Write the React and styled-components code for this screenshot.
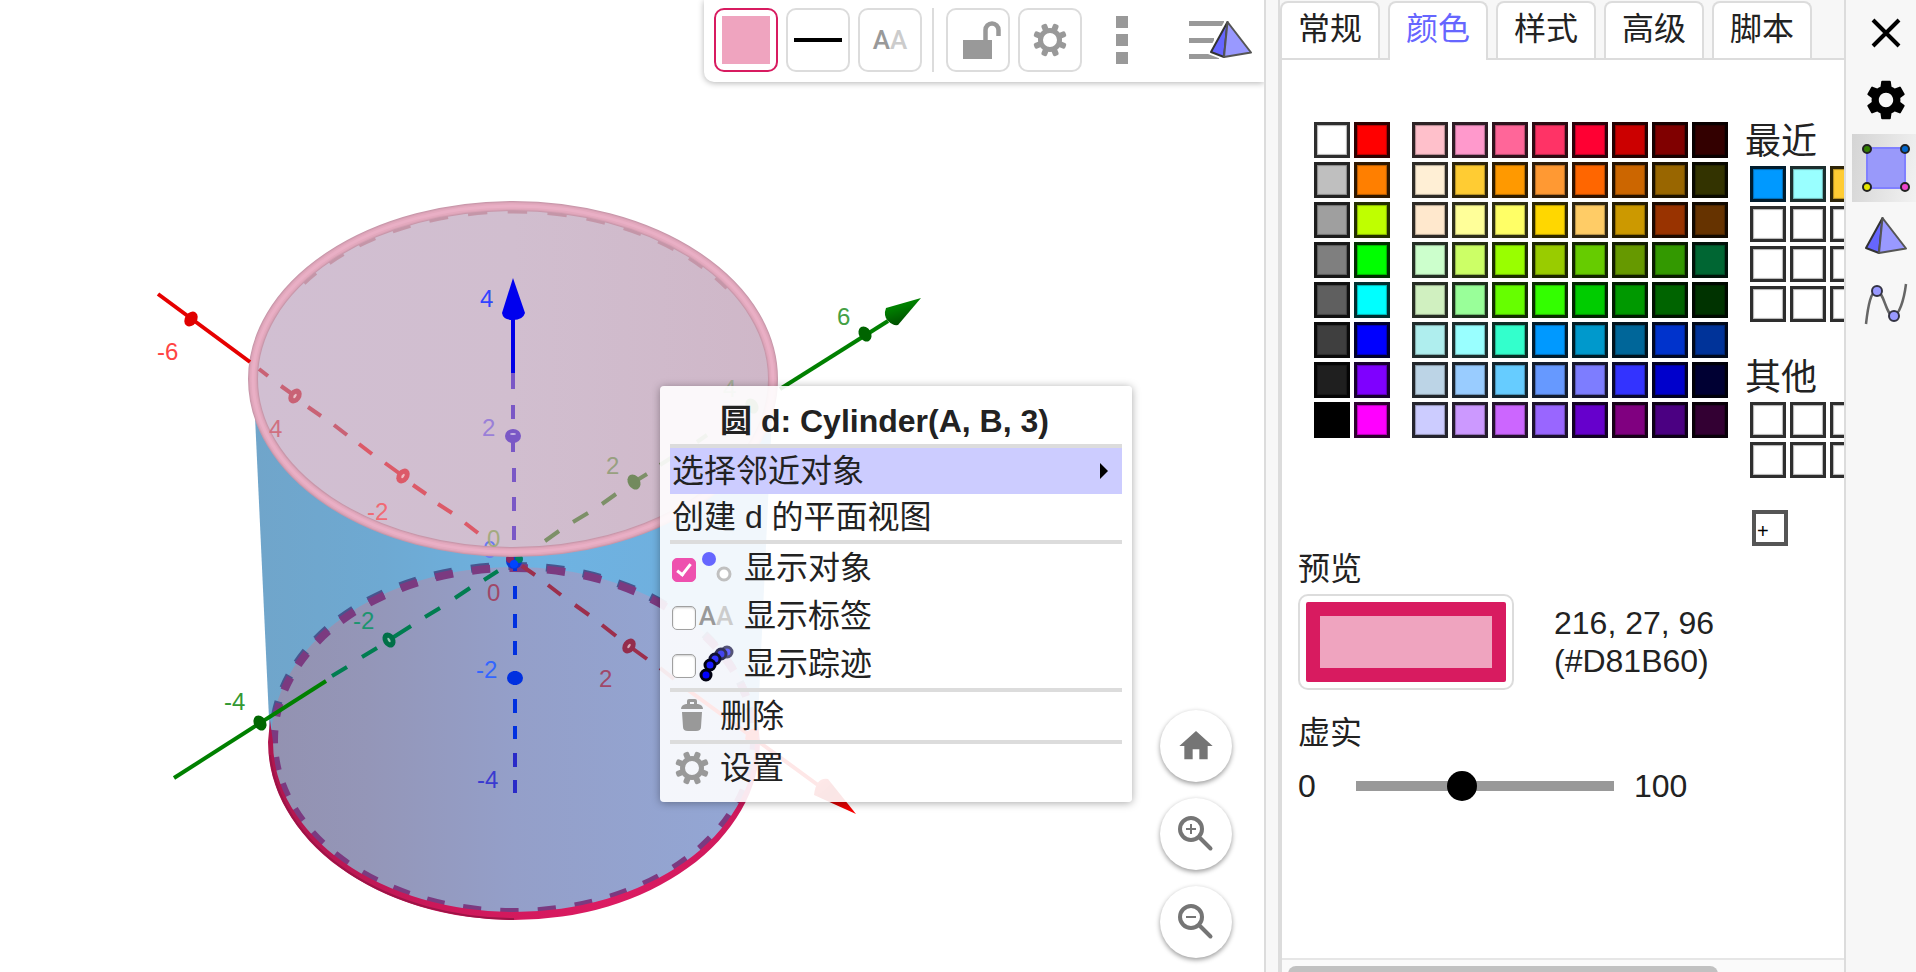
import React, { useState } from "react";
import styled, { createGlobalStyle, css } from "styled-components";
import { MdHome, MdSettings } from "react-icons/md";

const GlobalStyle = createGlobalStyle`
  *, *::before, *::after { box-sizing: border-box; }
  body {
    margin: 0;
    overflow: hidden;
    background: #ffffff;
    color: #222222;
    font-family: "Liberation Sans", "Noto Sans CJK SC", sans-serif;
    font-size: 32px;
  }
  button { margin: 0; padding: 0; border: 0; background: none; color: inherit; font: inherit; cursor: pointer; }
`;

/* ---------- page frame ---------- */

const Page = styled.div`
  display: flex;
  height: 100vh;
`;

const View = styled.main`
  position: relative;
  flex: 1;
  min-width: 0;
  overflow: hidden;
  background: #ffffff;
`;

const Scene = styled.svg`
  display: block;
  width: 100%;
  height: 100%;
  font-family: "Liberation Sans", sans-serif;
  font-size: 24px;
`;

const Splitter = styled.div`
  flex: none;
  width: 18px;
  background: #f7f7f7;
  border-left: 2px solid #dcdcdc;
  border-right: 4px solid #dcdcdc;
`;

/* ---------- style bar ---------- */

const StyleBar = styled.div`
  position: absolute;
  top: 0;
  right: 0;
  display: flex;
  align-items: center;
  gap: 8px;
  padding: 8px 12px 10px 10px;
  background: #ffffff;
  border-bottom-left-radius: 10px;
  box-shadow: 0 1px 6px rgba(0, 0, 0, 0.3);
`;

const ToolButton = styled.button`
  display: flex;
  align-items: center;
  justify-content: center;
  width: 64px;
  height: 64px;
  border: 2px solid ${(p) => (p.$active ? "#d81b60" : "#dcdcdc")};
  border-radius: 10px;
`;

const PlainTool = styled.button`
  display: flex;
  align-items: center;
  justify-content: ${(p) => (p.$end ? "flex-end" : "center")};
  width: ${(p) => p.$width}px;
  height: 64px;
`;

const BarDivider = styled.span`
  width: 2px;
  height: 64px;
  margin: 0 4px 0 2px;
  background: #dcdcdc;
`;

const FillSample = styled.span`
  width: 48px;
  height: 48px;
  background: #efa4bf;
`;

const LineSample = styled.span`
  width: 48px;
  height: 4px;
  background: #000000;
`;

const LabelGlyph = styled.span`
  display: inline-block;
  width: 36px;
  color: #999999;
  font: 500 26px/32px Roboto, sans-serif;
  text-align: center;
  i { color: #cccccc; font-style: normal; }
`;

/* ---------- zoom buttons ---------- */

const ZoomStack = styled.div`
  position: absolute;
  right: 32px;
  bottom: 14px;
  display: flex;
  flex-direction: column;
  gap: 16px;
`;

const RoundButton = styled.button`
  display: flex;
  align-items: center;
  justify-content: center;
  width: 72px;
  height: 72px;
  border-radius: 50%;
  background: #ffffff;
  color: #757575;
  box-shadow: 0 2px 5px rgba(0, 0, 0, 0.4);
`;

/* ---------- context menu ---------- */

const Menu = styled.div`
  position: absolute;
  left: 660px;
  top: 386px;
  width: 472px;
  padding: 10px;
  background: rgba(255, 255, 255, 0.9);
  border-radius: 4px;
  box-shadow: 0 1px 8px rgba(0, 0, 0, 0.35);
`;

const MenuTitle = styled.div`
  height: 48px;
  padding-left: 50px;
  font-weight: 700;
  line-height: 50px;
`;

const rowBase = css`
  display: flex;
  align-items: center;
  width: 100%;
  line-height: 46px;
  text-align: left;
  white-space: nowrap;
`;

const MenuItem = styled.button`
  ${rowBase}
  justify-content: space-between;
  height: 46px;
  padding: 0 14px 0 2px;
  background: ${(p) => (p.$active ? "#ccccff" : "transparent")};
`;

const IconItem = styled.button`
  ${rowBase}
  height: 48px;
  padding-left: 4px;
  gap: 10px;
`;

const CheckItem = styled.label`
  ${rowBase}
  height: 48px;
  padding-left: 2px;
  cursor: pointer;
`;

const MenuLine = styled.hr`
  height: 4px;
  margin: 0;
  border: 0;
  background: #dcdcdc;
`;

const RowIcon = styled.span`
  display: flex;
  align-items: center;
  justify-content: center;
  width: 40px;
  height: 40px;
  margin-right: 8px;
`;

const CheckBox = styled.input`
  appearance: none;
  display: flex;
  justify-content: center;
  width: 24px;
  height: 24px;
  margin: 4px 0 0;
  border: 1px solid #a0a0a0;
  border-radius: 5px;
  background: #ffffff;
  box-shadow: inset 0 1px 2px rgba(0, 0, 0, 0.2);
  &:checked { border-color: #ee50ae; background: #ee50ae; box-shadow: none; }
  &:checked::after {
    content: "";
    width: 8px;
    height: 15px;
    margin-top: 2px;
    border: solid #ffffff;
    border-width: 0 3px 3px 0;
    transform: rotate(38deg);
  }
`;

/* ---------- properties panel ---------- */

const Panel = styled.section`
  display: flex;
  flex-direction: column;
  flex: none;
  width: 564px;
  border-right: 2px solid #dcdcdc;
  background: #ffffff;
`;

const TabStrip = styled.div`
  display: flex;
  align-items: flex-start;
  gap: 8px;
  height: 60px;
  margin-left: -2px;
  padding-top: 1px;
  background: #f7f7f7;
  box-shadow: inset 0 -2px #dcdcdc;
`;

const Tab = styled.button`
  display: flex;
  justify-content: center;
  width: 100px;
  height: ${(p) => (p.$active ? 59 : 57)}px;
  border: 2px solid #dcdcdc;
  border-bottom: 0;
  border-radius: 8px 8px 0 0;
  background: #ffffff;
  color: ${(p) => (p.$active ? "#6666ff" : "#222222")};
  line-height: 52px;
`;

const PanelBody = styled.div`
  flex: 1;
  min-height: 0;
  overflow: hidden;
  padding: 62px 0 0 16px;
`;

const Palette = styled.div`
  display: flex;
  align-items: flex-start;
  padding-left: 16px;
`;

const SwatchGrid = styled.div`
  display: grid;
  flex: none;
  grid-template-columns: repeat(${(p) => p.$cols}, 36px);
  gap: 4px;
  margin-right: ${(p) => p.$after || 0}px;
`;

const Swatch = styled.button`
  width: 36px;
  height: 36px;
  border: 3px solid rgba(0, 0, 0, 0.82);
  background: ${(p) => p.$color};
  box-shadow: inset 0 0 1px 1px rgba(0, 0, 0, 0.3);
`;

const SideColors = styled.div`
  flex: none;
`;

const SideTitle = styled.div`
  height: 44px;
  margin-top: ${(p) => p.$top || 0}px;
  font-size: 36px;
  line-height: 40px;
`;

const SideSwatches = styled.div`
  padding-left: 5px;
`;

const AddColor = styled.button`
  display: flex;
  align-items: center;
  width: 36px;
  height: 36px;
  margin: 32px 0 0 7px;
  padding: 6px 0 0 1px;
  border: 4px solid #555555;
  color: #000000;
  font-size: 20px;
  line-height: 20px;
`;

const FieldLabel = styled.label`
  display: block;
  height: 48px;
  margin-top: ${(p) => p.$top || 0}px;
  line-height: 46px;
`;

const PreviewRow = styled.div`
  display: flex;
  align-items: center;
  gap: 40px;
  line-height: 38px;
`;

const PreviewFrame = styled.div`
  padding: 6px;
  border: 2px solid #dcdcdc;
  border-radius: 10px;
`;

const PreviewColor = styled.div`
  width: 200px;
  height: 80px;
  border: 14px solid #d81b60;
  border-radius: 2px;
  background: #efa4bf;
`;

const SliderRow = styled.div`
  display: flex;
  align-items: center;
  gap: 20px;
  height: 56px;
`;

const SliderMin = styled.span`
  width: 38px;
`;

const Slider = styled.input`
  appearance: none;
  width: 258px;
  height: 30px;
  margin: 0;
  background: transparent;
  &::-webkit-slider-runnable-track { height: 10px; background: #999999; }
  &::-webkit-slider-thumb {
    appearance: none;
    width: 30px;
    height: 30px;
    margin-top: -10px;
    border-radius: 50%;
    background: #000000;
  }
`;

const ScrollTrack = styled.div`
  height: 14px;
  padding: 6px 0 0 6px;
  overflow: hidden;
  border-top: 2px solid #e6e6e6;
  background: #fafafa;
`;

const ScrollThumb = styled.div`
  width: 430px;
  height: 16px;
  border-radius: 8px;
  background: #c1c1c1;
`;

/* ---------- right rail ---------- */

const Rail = styled.nav`
  display: flex;
  flex-direction: column;
  flex: none;
  width: 70px;
  padding-left: 6px;
  background: #f7f7f7;
`;

const RailButton = styled.button`
  display: flex;
  align-items: center;
  justify-content: center;
  height: ${(p) => p.$height || 68}px;
  padding-left: 4px;
  color: #000000;
  background: ${(p) => (p.$active ? "linear-gradient(100deg, #d4d4d4, #f2f2f2)" : "none")};
`;

/* ---------- icons ---------- */

const SoftGear = () => (
  <svg width="36" height="36" viewBox="-18 -18 36 36" fill="#999999">
    <circle r="9.5" fill="none" stroke="#999999" strokeWidth="5" />
    {[0, 1, 2, 3, 4, 5, 6, 7].map((i) => (
      <rect key={i} x="-3" y="-17" width="6" height="8" rx="2" transform={`rotate(${22.5 + i * 45})`} />
    ))}
  </svg>
);

const LockIcon = () => (
  <svg width="60" height="60" viewBox="0 0 60 60">
    <rect x="15" y="30" width="29" height="19" fill="#999999" />
    <path d="M37.500 31V20a6.500 6.500 0 0 1 13 0v6" fill="none" stroke="#999999" strokeWidth="4.500" />
  </svg>
);

const KebabIcon = () => (
  <svg width="12" height="48" fill="#999999">
    <rect width="12" height="12" />
    <rect y="18" width="12" height="12" />
    <rect y="36" width="12" height="12" />
  </svg>
);

const Pyramid = ({ x = 0, y = 0 }) => (
  <g transform={`translate(${x} ${y})`} stroke="#555555" strokeWidth="2" strokeLinejoin="round">
    <path d="M17.500 1L1 31l13 5z" fill="#6666ff" stroke="#333333" />
    <path d="M17.500 1L41 31.500 14 36z" fill="#9999ff" />
  </g>
);

const StyleIcon = () => (
  <svg width="63" height="42">
    <path d="M0 4.500h35M0 21.500h25M0 37.500h30" stroke="#999999" strokeWidth="5" />
    <path d="M38.500 3L22 33l13 5 27-5z" fill="#ffffff" stroke="#ffffff" strokeWidth="6" />
    <Pyramid x={21} y={2} />
  </svg>
);

const MagnifierIcon = ({ plus }) => (
  <svg width="40" height="40" fill="none" stroke="#757575">
    <circle cx="15" cy="15" r="11" strokeWidth="4" />
    <path d="M24.500 24.500l10 10" strokeWidth="4" strokeLinecap="round" />
    <path d={plus ? "M10 15h10M15 10v10" : "M10 15h10"} strokeWidth="2" />
  </svg>
);

const CloseIcon = () => (
  <svg width="30" height="30" stroke="#000000" strokeWidth="4">
    <path d="M2 2l26 26M28 2L2 28" />
  </svg>
);

const SquareIcon = () => (
  <svg width="48" height="48" stroke="#222222" strokeWidth="2">
    <rect x="5" y="4" width="38" height="40" fill="#9999fa" stroke="#8080ff" />
    <circle cx="5" cy="5" r="4" fill="#338000" />
    <circle cx="43" cy="5" r="4" fill="#0066cc" />
    <circle cx="5" cy="43" r="4" fill="#e6e600" />
    <circle cx="43" cy="43" r="4" fill="#ee44cc" />
  </svg>
);

const CurveIcon = () => (
  <svg width="44" height="44" fill="none" stroke="#666666" strokeWidth="2.500">
    <path d="M2 42C4 24 7 8 13 9c7 1 9 24 16 25C35 34 40 18 42 2" />
    <circle cx="13" cy="9" r="5" fill="#9999ff" stroke="#333344" strokeWidth="2" />
    <circle cx="30" cy="34" r="5" fill="#9999ff" stroke="#333344" strokeWidth="2" />
  </svg>
);

const ObjectIcon = () => (
  <svg width="40" height="40">
    <circle cx="13" cy="11" r="7" fill="#6666ff" />
    <circle cx="28" cy="26" r="6" fill="#ffffff" stroke="#c0c0c0" strokeWidth="3" />
  </svg>
);

const TraceIcon = () => (
  <svg width="40" height="40" stroke="#000011" strokeWidth="3">
    <circle cx="31" cy="8" r="5" fill="#6666ff" stroke="#555577" />
    <circle cx="25" cy="10" r="5" fill="#4444ee" stroke="#333355" />
    <circle cx="19" cy="15" r="5" fill="#3333ff" stroke="#111133" />
    <circle cx="14" cy="21" r="5" fill="#1a1aff" />
    <circle cx="10" cy="31" r="5" fill="#0000ff" />
  </svg>
);

const TrashIcon = () => (
  <svg width="36" height="36" fill="#999999">
    <path d="M13 6V3q0-2 2-2h6q2 0 2 2v3h-3V4h-4v2zM7 11q0-4 5-5h12q5 1 5 5zM8 14h20l-1 15q0 4-5 4h-8q-5 0-5-4z" />
  </svg>
);

/* ---------- 3D scene ---------- */

const TOP = { cx: 513, cy: 379, rx: 260, ry: 173 };
const BASE = { cx: 514, cy: 740, rx: 240, ry: 172 };

const pointAt = (e, deg) => {
  const a = (deg * Math.PI) / 180;
  return `${e.cx + e.rx * Math.sin(a)} ${e.cy - e.ry * Math.cos(a)}`;
};

// Dashes lie at equal angles round the circle, which foreshortens them at the sides.
const dashedRing = (e, offset, from = 0, to = 40) => {
  let d = "";
  for (let i = from; i < to; i += 1) {
    const mid = offset + i * 9;
    d += `M${pointAt(e, mid - 2.2)}A${e.rx} ${e.ry} 0 0 1 ${pointAt(e, mid + 2.2)}`;
  }
  return d;
};

const LABELS = [
  ["-6", 157, 360, "#ff4444"],
  ["4", 269, 437, "#d07080"],
  ["-2", 367, 520, "#f06a74"],
  ["4", 480, 307, "#3344ff"],
  ["2", 482, 436, "#9a80d8"],
  ["0", 487, 547, "#a3aa80"],
  ["0", 487, 601, "#a04868"],
  ["2", 599, 687, "#a04868"],
  ["-2", 353, 629, "#1d9470"],
  ["-4", 224, 710, "#339933"],
  ["-2", 476, 678, "#3366ff"],
  ["-4", 477, 788, "#3a3ad0"],
  ["2", 606, 474, "#98a080"],
  ["6", 837, 325, "#44a044"],
  ["4", 723, 397, "#a3ab98"],
];

const Ticks = ({ at, rotate, color, hollow }) =>
  at.map(([x, y]) => (
    <g key={x} transform={`translate(${x} ${y}) rotate(${rotate})`}>
      <ellipse rx="6" ry="8" fill={color} />
      {hollow && <ellipse rx="1.200" ry="2.500" fill="#ffffff" opacity="0.6" />}
    </g>
  ));

const CylinderScene = () => (
  <Scene role="img" aria-label="Cylinder(A, B, 3)">
    <defs>
      <linearGradient id="side">
        <stop offset="0" stopColor="#70a5ca" />
        <stop offset="0.25" stopColor="#6ea9d2" />
        <stop offset="0.55" stopColor="#6eb3e2" />
        <stop offset="1" stopColor="#70addb" />
      </linearGradient>
      <linearGradient id="baseFill">
        <stop offset="0" stopColor="#9392b1" />
        <stop offset="0.2" stopColor="#9496b8" />
        <stop offset="0.5" stopColor="#949fc9" />
        <stop offset="1" stopColor="#93a7d5" />
      </linearGradient>
      <linearGradient id="topFill">
        <stop offset="0" stopColor="#d1bfd2" />
        <stop offset="0.5" stopColor="#d1becf" />
        <stop offset="1" stopColor="#cfb7c8" />
      </linearGradient>
      <linearGradient id="rim">
        <stop offset="0" stopColor="#b0164e" />
        <stop offset="0.35" stopColor="#cc185a" />
        <stop offset="0.7" stopColor="#dc1b62" />
        <stop offset="1" stopColor="#cc195b" />
      </linearGradient>
      <linearGradient id="redTip" x2="1" y2="1">
        <stop offset="0" stopColor="#ff2020" />
        <stop offset="0.400" stopColor="#c80000" />
        <stop offset="1" stopColor="#ff0000" />
      </linearGradient>
      <linearGradient id="greenTip" x2="0.400" y2="1">
        <stop offset="0.400" stopColor="#008000" />
        <stop offset="1" stopColor="#004d00" />
      </linearGradient>
    </defs>

    <path d="M254 395L270 740L757 740L773 395z" fill="url(#side)" />
    <ellipse cx="514" cy="741" rx="243" ry="174" fill="url(#baseFill)" />
    <path d={dashedRing(BASE, 1.1, -9, 10)} transform="translate(-1 -2)" fill="none" stroke="#46568f" strokeWidth="8" />
    <path d={dashedRing(BASE, 1.1)} fill="none" stroke="#7b3a80" strokeWidth="8" />
    <path d="M268 742A246 178 0 0 0 760 742L758 722L755 742A241 170 0 0 1 273 742L270 720z" fill="url(#rim)" />
    <path d="M270 755A246 177 0 0 0 514 919" fill="none" stroke="#9d1447" strokeWidth="2" />

    <g fill="none" stroke="#9c2f4c" strokeWidth="4">
      <path d="M522 566l13 9M548 585l13 10M575 605l14 10M602 625l14 11M629 646l18 13M660 668l14 11" />
      <path d="M688 690L822 788" stroke="#f01010" />
    </g>
    <path d="M814 795Q816 777 828 779L856 814z" fill="url(#redTip)" />
    <Ticks at={[[629, 646]]} rotate={35} color="#942d4c" hollow />
    <Ticks at={[[752, 736]]} rotate={35} color="#f01010" />

    <g fill="none" strokeWidth="4">
      <path d="M174 778L326 681" stroke="#008000" />
      <path d="M332 676l15-9M362 657l15-9M389 640l22-14M425 617l15-9M455 598l15-10M484 580l14-9" stroke="#007d50" />
    </g>
    <Ticks at={[[260, 723]]} rotate={-30} color="#006600" />
    <Ticks at={[[389, 640]]} rotate={-30} color="#007048" hollow />

    <path d="M515 567v4M515 586v13M515 614v14M515 641v14M515 671v14M515 699v14M515 726v13" stroke="#0030e0" strokeWidth="4" />
    <path d="M515 753v14M515 780v13" stroke="#2a2ac8" strokeWidth="4" />
    <ellipse cx="515" cy="678" rx="8" ry="7" fill="#0030e0" />

    <path d="M780 389L888 321" stroke="#008000" strokeWidth="4" />
    <Ticks at={[[865, 334]]} rotate={-30} color="#006400" />
    <path d="M921 298L886 308Q883 316 888 321T898 325z" fill="url(#greenTip)" />

    <g>
      <circle cx="514" cy="561" r="8" fill="#0838d8" />
      <circle cx="510" cy="559" r="4" fill="#8a2860" />
      <circle cx="519" cy="559" r="4" fill="#007d60" />
      <circle cx="514" cy="564" r="4" fill="#0044ff" />
    </g>

    <ellipse cx={TOP.cx} cy={TOP.cy} rx={TOP.rx} ry={TOP.ry} fill="url(#topFill)" />
    <text x="483" y="558" fill="#6a7af0">0</text>
    <path d={dashedRing({ cx: 513, cy: 379, rx: 254, ry: 167 }, 1, -6, 7)} fill="none" stroke="#c496a8" strokeWidth="3" />
    <g fill="none">
      <ellipse cx={TOP.cx} cy={TOP.cy} rx={TOP.rx} ry={TOP.ry} stroke="#c897aa" strokeWidth="10" />
      <ellipse cx={TOP.cx} cy={TOP.cy} rx={TOP.rx} ry={TOP.ry} stroke="#d9a2b6" strokeWidth="8" />
      <ellipse cx={TOP.cx} cy={TOP.cy} rx={TOP.rx} ry={TOP.ry} stroke="#e3a9be" strokeWidth="6" />
      <ellipse cx={TOP.cx} cy={TOP.cy} rx={TOP.rx} ry={TOP.ry} stroke="#e9afc5" strokeWidth="3" />
    </g>

    <path d="M158 294L250 362" stroke="#e60000" strokeWidth="4" />
    <Ticks at={[[191, 319]]} rotate={35} color="#e00000" />
    <path d="M259 369l9 7M281 386l14 10M308 407l13 9M334 425l13 10" stroke="#c96275" strokeWidth="4" />
    <path d="M359 444l13 10M385 463l18 13M413 485l13 9M438 504l14 9M465 523l13 10" stroke="#dc5a68" strokeWidth="4" />
    <Ticks at={[[295, 396]]} rotate={35} color="#c96275" hollow />
    <Ticks at={[[403, 476]]} rotate={35} color="#dc5a68" hollow />

    <path d="M545 541l14-10M573 522l15-9M602 504l14-10M634 482l13-8M660 465l14-9M697 442l10-7" stroke="#7d9068" strokeWidth="4" />
    <Ticks at={[[634, 482], [752, 406]]} rotate={-30} color="#738a5e" />

    <path d="M513 316v57" stroke="#0000e6" strokeWidth="4" />
    <path d="M513 278L502 313Q503 320 513 320T525 313z" fill="#0000ee" />
    <path d="M513 373v16M513 405v14M513 440v12M514 468v14M514 497v14M514 526v14" stroke="#7a58c6" strokeWidth="4" />
    <ellipse cx="513" cy="436" rx="8" ry="7" fill="#7a58c6" />
    <ellipse cx="513" cy="434" rx="3" ry="1" fill="#c8b8e4" />

    {LABELS.map(([text, x, y, fill]) => (
      <text key={`${x}-${y}`} x={x} y={y} fill={fill}>
        {text}
      </text>
    ))}
  </Scene>
);

/* ---------- data ---------- */

const BASIC = [
  "#ffffff", "#ff0000", "#bfbfbf", "#ff7f00", "#9f9f9f", "#bfff00", "#7f7f7f", "#00ff00",
  "#5f5f5f", "#00ffff", "#3f3f3f", "#0000ff", "#1f1f1f", "#7f00ff", "#000000", "#ff00ff",
];

const SHADES = [
  "#ffc0cb", "#ff99cc", "#ff6699", "#ff3366", "#ff0033", "#cc0000", "#800000", "#330000",
  "#ffefd5", "#ffcc33", "#ff9900", "#ff9933", "#ff6600", "#cc6600", "#996600", "#333300",
  "#ffe8cd", "#ffff99", "#ffff66", "#ffd700", "#ffcc66", "#cc9900", "#993300", "#663300",
  "#ccffcc", "#ccff66", "#99ff00", "#99cc00", "#66cc00", "#669900", "#339900", "#006633",
  "#d0f0c0", "#99ff99", "#66ff00", "#33ff00", "#00cc00", "#009900", "#006400", "#003300",
  "#afeeee", "#99ffff", "#33ffcc", "#0099ff", "#0099cc", "#006699", "#0033cc", "#003399",
  "#bcd4e6", "#99ccff", "#66ccff", "#6699ff", "#7d7dff", "#3333ff", "#0000cc", "#000033",
  "#ccccff", "#cc99ff", "#cc66ff", "#9966ff", "#6600cc", "#800080", "#4b0082", "#330033",
];

const RECENT = ["#0099ff", "#99ffff", "#ffcc33", ...Array(9).fill("#ffffff")];
const OTHER = Array(6).fill("#ffffff");
const TABS = ["常规", "颜色", "样式", "高级", "脚本"];

const Swatches = ({ colors, cols, after }) => (
  <SwatchGrid $cols={cols} $after={after}>
    {colors.map((c, i) => (
      <Swatch key={i} $color={c} aria-label={c} />
    ))}
  </SwatchGrid>
);

const CheckRow = ({ text, icon, initial = false }) => {
  const [on, setOn] = useState(initial);
  return (
    <CheckItem>
      <CheckBox type="checkbox" checked={on} onChange={() => setOn(!on)} />
      <RowIcon>{icon}</RowIcon>
      {text}
    </CheckItem>
  );
};

const AA = () => (
  <LabelGlyph>
    A<i>A</i>
  </LabelGlyph>
);

export default function App() {
  const [tab, setTab] = useState(1);
  const [opacity, setOpacity] = useState(40);

  return (
    <>
      <GlobalStyle />
      <Page>
        <View>
          <CylinderScene />

          <StyleBar>
            <ToolButton $active aria-label="颜色"><FillSample /></ToolButton>
            <ToolButton aria-label="线型"><LineSample /></ToolButton>
            <ToolButton aria-label="标签"><AA /></ToolButton>
            <BarDivider />
            <ToolButton aria-label="锁定"><LockIcon /></ToolButton>
            <ToolButton aria-label="设置"><SoftGear /></ToolButton>
            <PlainTool $width={64} aria-label="更多"><KebabIcon /></PlainTool>
            <PlainTool $width={90} $end aria-label="样式栏"><StyleIcon /></PlainTool>
          </StyleBar>

          <ZoomStack>
            <RoundButton aria-label="标准视图"><MdHome size={40} /></RoundButton>
            <RoundButton aria-label="放大"><MagnifierIcon plus /></RoundButton>
            <RoundButton aria-label="缩小"><MagnifierIcon /></RoundButton>
          </ZoomStack>

          <Menu>
            <MenuTitle>圆 d: Cylinder(A, B, 3)</MenuTitle>
            <MenuLine />
            <MenuItem $active>
              选择邻近对象
              <svg width="8" height="16"><path d="M0 0l8 8-8 8z" /></svg>
            </MenuItem>
            <MenuItem>创建 d 的平面视图</MenuItem>
            <MenuLine />
            <CheckRow text="显示对象" icon={<ObjectIcon />} initial />
            <CheckRow text="显示标签" icon={<AA />} />
            <CheckRow text="显示踪迹" icon={<TraceIcon />} />
            <MenuLine />
            <IconItem><TrashIcon />删除</IconItem>
            <MenuLine />
            <IconItem><SoftGear />设置</IconItem>
          </Menu>
        </View>

        <Splitter />

        <Panel>
          <TabStrip role="tablist">
            {TABS.map((name, i) => (
              <Tab key={name} role="tab" aria-selected={i === tab} $active={i === tab} onClick={() => setTab(i)}>
                {name}
              </Tab>
            ))}
          </TabStrip>
          <PanelBody>
            <Palette>
              <Swatches colors={BASIC} cols={2} after={22} />
              <Swatches colors={SHADES} cols={8} after={17} />
              <SideColors>
                <SideTitle>最近</SideTitle>
                <SideSwatches><Swatches colors={RECENT} cols={3} /></SideSwatches>
                <SideTitle $top={36}>其他</SideTitle>
                <SideSwatches><Swatches colors={OTHER} cols={3} /></SideSwatches>
                <AddColor>+</AddColor>
              </SideColors>
            </Palette>
            <FieldLabel as="div">预览</FieldLabel>
            <PreviewRow>
              <PreviewFrame><PreviewColor /></PreviewFrame>
              <div>216, 27, 96<br />(#D81B60)</div>
            </PreviewRow>
            <FieldLabel htmlFor="opacity" $top={20}>虚实</FieldLabel>
            <SliderRow>
              <SliderMin>0</SliderMin>
              <Slider id="opacity" type="range" min="0" max="100" value={opacity} onChange={(e) => setOpacity(Number(e.target.value))} />
              <span>100</span>
            </SliderRow>
          </PanelBody>
          <ScrollTrack><ScrollThumb /></ScrollTrack>
        </Panel>

        <Rail>
          <RailButton $height={66} aria-label="关闭"><CloseIcon /></RailButton>
          <RailButton aria-label="设置"><MdSettings size={48} /></RailButton>
          <RailButton $active aria-label="对象"><SquareIcon /></RailButton>
          <RailButton aria-label="3D 绘图区"><svg width="42" height="38"><Pyramid /></svg></RailButton>
          <RailButton aria-label="函数"><CurveIcon /></RailButton>
        </Rail>
      </Page>
    </>
  );
}
